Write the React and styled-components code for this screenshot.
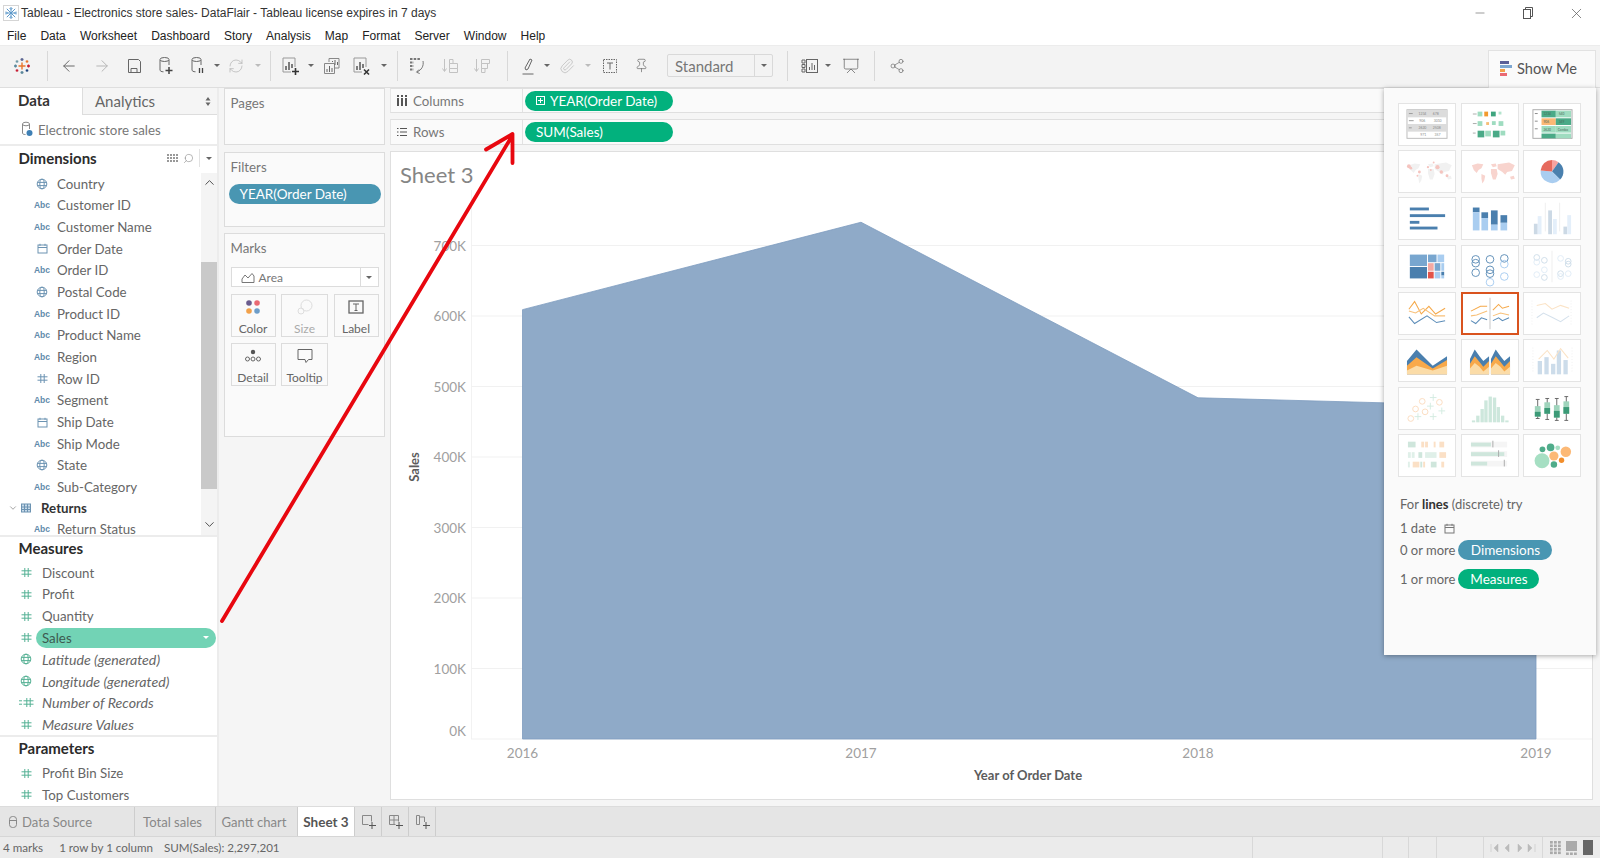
import React from "react";
import styled, { createGlobalStyle } from "styled-components";
import { ArrowLeft, ArrowRight, Minus, Paperclip, Pin, Presentation, RefreshCw, Share2, X, Search, ChevronUp, ChevronDown } from "lucide-react";

const GlobalStyle = createGlobalStyle`
  html, body { margin: 0; padding: 0; background: #fff; }
  body { font-family: "Lato", "Open Sans", sans-serif; color: #666; overflow: hidden; }
  * { box-sizing: border-box; }
`;

const Page = styled.div`
  position: relative;
  width: 1600px;
  height: 858px;
  display: flex;
  flex-direction: column;
  overflow: hidden;
`;

const TitleBar = styled.div`
  height: 26px;
  display: flex;
  align-items: center;
  padding-left: 3px;
  font: 12px "Liberation Sans", sans-serif;
  color: #333;
  background: #fff;
`;
const TitleText = styled.span`
  margin-left: 2px;
  flex: 1;
`;
const WindowBtn = styled.div`
  width: 48px;
  display: flex;
  justify-content: center;
  color: #555;
`;
const MenuBar = styled.div`
  height: 19px;
  display: flex;
  align-items: center;
  padding-left: 7px;
  gap: 14.1px;
  font: 12px "Liberation Sans", sans-serif;
  color: #222;
  background: #fff;
`;

const Toolbar = styled.div`
  height: 43px;
  display: flex;
  align-items: center;
  padding-bottom: 2px;
  background: #f3f3f3;
  border-top: 1px solid #ececec;
  border-bottom: 1px solid #dedede;
`;
const LogoSlot = styled.div`
  width: 47px;
  display: flex;
  justify-content: center;
  padding-right: 3px;
`;
const Sep = styled.div`
  width: 1px;
  height: 30px;
  background: #d8d8d8;
  margin-left: ${(p) => p.$ml || 0}px;
`;
const Tool = styled.div`
  width: 24px;
  height: 24px;
  display: flex;
  align-items: center;
  justify-content: center;
  margin-left: ${(p) => p.$ml || 0}px;
  color: ${(p) => (p.$faint ? "#b4b4b4" : "#666")};
`;
const Caret = styled.div`
  width: 8px;
  height: 8px;
  display: flex;
  align-items: center;
  justify-content: center;
  margin-left: ${(p) => p.$ml || 0}px;
  &::after {
    content: "";
    border-left: 3px solid transparent;
    border-right: 3px solid transparent;
    border-top: 3px solid ${(p) => p.$color || "#666"};
  }
`;
const StandardSelect = styled.div`
  width: 106px;
  height: 23px;
  margin-left: ${(p) => p.$ml}px;
  display: flex;
  align-items: center;
  border: 1px solid #d9d9d9;
  border-radius: 2px;
  font-size: 15px;
  color: #777;
`;
const SelectLabel = styled.span`
  flex: 1;
  padding-left: 7px;
`;
const SelectArrow = styled.div`
  width: 18px;
  height: 100%;
  display: flex;
  align-items: center;
  justify-content: center;
  border-left: 1px solid #d9d9d9;
`;
const ShowMeTab = styled.div`
  margin-left: auto;
  margin-right: 4px;
  align-self: flex-end;
  width: 108px;
  height: 38px;
  margin-bottom: -3px;
  display: flex;
  align-items: center;
  padding: 0 0 3px 11px;
  gap: 5px;
  background: #fafafa;
  border: 1px solid #e2e2e2;
  border-bottom: none;
  font-size: 14.6px;
  color: #555;
`;

const Workspace = styled.div`
  flex: 1;
  display: flex;
  min-height: 0;
  background: #f5f5f5;
`;

const Sidebar = styled.div`
  width: 219px;
  display: flex;
  flex-direction: column;
  background: #fff;
  border-right: 2px solid #ececec;
`;
const SideTabs = styled.div`
  height: 27px;
  display: flex;
`;
const DataTab = styled.div`
  width: 82px;
  padding-left: 18px;
  line-height: 25px;
  font-size: 15px;
  font-weight: 700;
  color: #333;
`;
const AnalyticsTab = styled.div`
  flex: 1;
  display: flex;
  align-items: center;
  justify-content: space-between;
  padding: 0 6px 0 12px;
  font-size: 15px;
  color: #666;
  background: #f5f5f5;
  border-left: 1px solid #ddd;
  border-bottom: 1px solid #ddd;
`;
const SourceRow = styled.div`
  height: 31px;
  display: flex;
  align-items: center;
  gap: 5px;
  padding-left: 21px;
  font-size: 13.3px;
  color: #777;
  border-bottom: 2px solid #ececec;
`;
const SectionHeader = styled.div`
  height: 27px;
  display: flex;
  align-items: center;
  padding: 0 0 ${(p) => p.$drop}px 18.5px;
  font-size: 15px;
  font-weight: 700;
  color: #2b2b2b;
  border-top: ${(p) => (p.$line ? "2px solid #ececec" : "none")};
`;
const HeaderTools = styled.div`
  margin-left: auto;
  display: flex;
  align-items: center;
  gap: 5px;
  height: 18px;
  padding-right: 4px;
  color: #888;
`;
const HeaderDivider = styled.div`
  width: 1px;
  height: 18px;
  background: #e2e2e2;
`;
const DimensionsBody = styled.div`
  height: 362px;
  display: flex;
`;
const FieldList = styled.div`
  flex: 1;
`;
const ScrollTrack = styled.div`
  position: relative;
  width: 16px;
  background: #f4f4f4;
  display: flex;
  flex-direction: column;
  justify-content: space-between;
  align-items: center;
  padding: 2px 0 3px;
  color: #444;
`;
const ScrollThumb = styled.div`
  position: absolute;
  left: 0;
  right: 0;
  top: 89px;
  height: 227px;
  background: #c9c9c9;
`;
const FieldRow = styled.div`
  height: 21.67px;
  display: flex;
  align-items: center;
  padding-left: ${(p) => p.$indent}px;
  font-size: ${(p) => (p.$italic ? 14.2 : 13.3)}px;
  font-style: ${(p) => (p.$italic ? "italic" : "normal")};
  color: #666;
`;
const IconSlot = styled.div`
  width: 16px;
  display: flex;
  justify-content: center;
  align-items: center;
  font: 700 8.5px "Liberation Sans", sans-serif;
  font-style: normal;
  color: ${(p) => p.$color};
`;
const FieldName = styled.span`
  margin-left: ${(p) => p.$gap}px;
`;
const FieldPill = styled.div`
  margin-left: 2px;
  width: 180px;
  height: 20px;
  padding: 0 6px;
  display: flex;
  align-items: center;
  justify-content: space-between;
  border-radius: 10px;
  background: #72d3b5;
  color: #3d5a50;
`;
const GroupRow = styled.div`
  height: 20.7px;
  display: flex;
  align-items: center;
  padding-left: 8px;
  font-size: 13.3px;
  font-weight: 700;
  color: #333;
`;

const CardColumn = styled.div`
  width: 171px;
  padding: 0 5.5px 0 4.5px;
  display: flex;
  flex-direction: column;
`;
const Card = styled.div`
  height: ${(p) => p.$h}px;
  margin-bottom: ${(p) => p.$mb}px;
  padding: 5.5px 6px;
  background: #fafafa;
  border: 1px solid #dcdcdc;
`;
const CardTitle = styled.div`
  font-size: 13.3px;
  line-height: 17px;
  color: #777;
`;
const FilterPill = styled.div`
  margin: 8.5px 0 0 -2px;
  width: 152px;
  height: 20px;
  padding-left: 11px;
  line-height: 20px;
  border-radius: 10px;
  background: #4996b2;
  color: #fff;
  font-size: 13.5px;
`;
const MarkSelect = styled.div`
  margin-top: 10.5px;
  height: 20px;
  width: 148px;
  display: flex;
  align-items: center;
  padding-left: 9px;
  gap: 4px;
  font-size: 12px;
  color: #777;
  background: #fff;
  border: 1px solid #dcdcdc;
`;
const MarkArrow = styled.div`
  margin-left: auto;
  width: 18px;
  height: 100%;
  display: flex;
  align-items: center;
  justify-content: center;
  border-left: 1px solid #dcdcdc;
`;
const MarkGrid = styled.div`
  margin-top: 7px;
  display: grid;
  grid-template-columns: 45px 47px 45px;
  grid-auto-rows: 43px;
  gap: 6px 5.5px;
`;
const MarkButton = styled.div`
  display: flex;
  flex-direction: column;
  align-items: center;
  justify-content: space-between;
  padding: 4px 0 0;
  background: #fafafa;
  border: 1px solid #dcdcdc;
  font-size: 12px;
  color: ${(p) => (p.$faint ? "#aaa" : "#666")};
`;

const Main = styled.div`
  flex: 1;
  min-width: 0;
  padding-right: 7px;
  display: flex;
  flex-direction: column;
`;
const Shelf = styled.div`
  height: ${(p) => p.$h}px;
  margin-bottom: 6px;
  display: flex;
  align-items: center;
  background: #fafafa;
  border: 1px solid #dfdfdf;
  border-left: 1px solid #e6e6e6;
  border-right: none;
`;
const ShelfLabel = styled.div`
  width: 132px;
  height: 100%;
  display: flex;
  align-items: center;
  gap: 6px;
  padding-left: 6px;
  font-size: 13.3px;
  color: #777;
  border-right: 1px solid #e2e2e2;
`;
const GreenPill = styled.div`
  margin-left: 2px;
  width: 148px;
  height: 20px;
  display: flex;
  align-items: center;
  gap: 5px;
  padding-left: 11px;
  border-radius: 10px;
  background: #02b17d;
  color: #fff;
  font-size: 13.5px;
`;
const ChartCard = styled.div`
  flex: 1;
  margin-bottom: 6px;
  display: flex;
  flex-direction: column;
  background: #fff;
  border: 1px solid #dfdfdf;
`;
const SheetTitle = styled.div`
  height: 38px;
  padding: 6px 0 0 9px;
  font-size: 22px;
  line-height: 34px;
  color: #858585;
`;
const ChartSvg = styled.svg`
  flex: 1;
  display: block;
  width: 100%;
  font-family: "Lato", sans-serif;
`;

const TabStrip = styled.div`
  height: 31px;
  display: flex;
  background: #e5e5e5;
  border-top: 1px solid #dcdcdc;
  border-bottom: 1px solid #d6d6d6;
`;
const SheetTab = styled.div`
  width: ${(p) => p.$w}px;
  display: flex;
  align-items: center;
  justify-content: ${(p) => (p.$left ? "flex-start" : "center")};
  gap: 4px;
  padding: 0 ${(p) => p.$pr || 0}px 0 ${(p) => (p.$left ? 8 : 0)}px;
  font-size: ${(p) => (p.$active ? 13.5 : 13.1)}px;
  font-weight: ${(p) => (p.$active ? 700 : 400)};
  color: ${(p) => (p.$active ? "#555" : "#888")};
  background: ${(p) => (p.$active ? "#fff" : "transparent")};
  border-right: 1px solid #cdcdcd;
`;
const StatusBar = styled.div`
  height: 21px;
  display: flex;
  align-items: center;
  background: #ebebeb;
  font-size: 11.6px;
  color: #666;
`;
const StatusText = styled.span`
  margin-left: ${(p) => p.$ml}px;
`;
const StatusSpacer = styled.div`
  flex: 1;
`;
const StatusCell = styled.div`
  width: ${(p) => p.$w}px;
  height: 100%;
  display: flex;
  align-items: center;
  justify-content: space-around;
  padding: 0 4px;
  border-left: 1px solid #d8d8d8;
`;

const ShowMePanel = styled.div`
  position: absolute;
  left: 1384px;
  top: 88px;
  width: 212px;
  height: 567px;
  padding: 14.5px 14px 0;
  background: #fafafa;
  box-shadow: 0 1px 5px rgba(0, 0, 0, 0.35);
  font-size: 13px;
  color: #666;
`;
const ThumbGrid = styled.div`
  display: grid;
  grid-template-columns: repeat(3, 58px);
  grid-auto-rows: 43px;
  column-gap: 4.6px;
  row-gap: 4.4px;
`;
const Thumb = styled.div`
  background: #fff;
  border: ${(p) => (p.$active ? "1px solid #d9531e" : "1px solid #e4e4e4")};
  box-shadow: ${(p) => (p.$active ? "inset 0 0 0 1px #d9531e" : "none")};
  svg { display: block; width: 100%; height: 100%; }
`;
const InfoLine = styled.div`
  display: flex;
  align-items: center;
  height: ${(p) => p.$h}px;
  gap: ${(p) => p.$gap || 0}px;
  margin: ${(p) => p.$mt || 0}px 0 0 2px;
`;
const Strong = styled.b`
  color: #333;
`;
const InfoPill = styled.span`
  width: ${(p) => p.$w}px;
  height: 20px;
  display: inline-flex;
  align-items: center;
  justify-content: center;
  border-radius: 10px;
  background: ${(p) => p.$bg};
  color: #fff;
  font-size: 13.5px;
`;

const ArrowOverlay = styled.svg`
  position: absolute;
  inset: 0;
  width: 1600px;
  height: 858px;
  pointer-events: none;
`;

const line = { fill: "none", stroke: "currentColor", strokeWidth: 1 };

const HashIcon = ({ color }) => (
  <svg width="11" height="11" viewBox="0 0 11 11" fill="none" stroke={color} strokeWidth="1">
    <path d="M3.8 1v9M7.2 1v9M.5 3.8h10M.5 7.2h10" />
  </svg>
);
const GlobeIcon = ({ color }) => (
  <svg width="12" height="12" viewBox="0 0 12 12" fill="none" stroke={color} strokeWidth="1">
    <circle cx="6" cy="6" r="4.8" />
    <ellipse cx="6" cy="6" rx="2.2" ry="4.8" />
    <path d="M1.2 4.4h9.6M1.2 7.6h9.6" />
  </svg>
);
const CalendarIcon = ({ color = "#6c93b2" }) => (
  <svg width="11" height="11" viewBox="0 0 11 11" fill="none" stroke={color} strokeWidth="1">
    <rect x="1" y="2" width="9" height="8" />
    <path d="M1 4.5h9M3 .8v2M8 .8v2" />
  </svg>
);
const CylinderIcon = ({ children, width = 16 }) => (
  <svg width={width} height="20" viewBox="0 0 16 20" style={line}>
    <path d="M2 4v10c0 1 1.4 1.8 3.5 1.8M11 4v5" />
    <ellipse cx="6.5" cy="3.5" rx="4.5" ry="2" />
    {children}
  </svg>
);
const BarSheet = ({ children }) => (
  <svg width="20" height="20" viewBox="0 0 20 20" fill="none" stroke="#999" strokeWidth="1">
    <path d="M2 2h12v9M2 2v14h8" />
    <path d="M5 14V10M8 14V6M11 12V8" strokeWidth="1.5" stroke="#555" />
    {children}
  </svg>
);
const FieldIcon = ({ type, color }) => {
  if (type === "abc") return "Abc";
  if (type === "globe") return <GlobeIcon color={color} />;
  if (type === "date") return <CalendarIcon color={color} />;
  if (type === "count")
    return (
      <svg width="15" height="11" viewBox="0 0 15 11" fill="none" stroke={color}>
        <path d="M7.8 1v9M11.2 1v9M4.5 3.8h10M4.5 7.2h10M0 3.8h3M0 7.2h3" />
      </svg>
    );
  return <HashIcon color={color} />;
};

const dimensions = [
  ["globe", "Country"],
  ["abc", "Customer ID"],
  ["abc", "Customer Name"],
  ["date", "Order Date"],
  ["abc", "Order ID"],
  ["globe", "Postal Code"],
  ["abc", "Product ID"],
  ["abc", "Product Name"],
  ["abc", "Region"],
  ["hash", "Row ID"],
  ["abc", "Segment"],
  ["date", "Ship Date"],
  ["abc", "Ship Mode"],
  ["globe", "State"],
  ["abc", "Sub-Category"],
];

const measures = [
  ["hash", "Discount"],
  ["hash", "Profit"],
  ["hash", "Quantity"],
  ["hash", "Sales", true],
  ["globe", "Latitude (generated)", false, true],
  ["globe", "Longitude (generated)", false, true],
  ["count", "Number of Records", false, true],
  ["hash", "Measure Values", false, true],
];

const menus = ["File", "Data", "Worksheet", "Dashboard", "Story", "Analysis", "Map", "Format", "Server", "Window", "Help"];

const DimRow = ({ type, name }) => (
  <FieldRow $indent={34}>
    <IconSlot $color="#5f8bab">
      <FieldIcon type={type} color="#6c93b2" />
    </IconSlot>
    <FieldName $gap={7}>{name}</FieldName>
  </FieldRow>
);

const MeasureRow = ({ type, name, pill, italic }) => (
  <FieldRow $indent={18} $italic={italic}>
    <IconSlot $color="#4eab8a">
      <FieldIcon type={type} color="#55b194" />
    </IconSlot>
    {pill ? (
      <FieldPill>
        {name}
        <Caret $color="#fff" />
      </FieldPill>
    ) : (
      <FieldName $gap={8}>{name}</FieldName>
    )}
  </FieldRow>
);

const TableauLogo = () => (
  <svg width="18" height="18" viewBox="0 0 18 18" strokeWidth="1.4" fill="none">
    <path d="M9 5.5v7M5.5 9h7" stroke="#e8762d" />
    <path d="M9 1v3M7.5 2.5h3" stroke="#5b6591" />
    <path d="M9 14v3M7.5 15.5h3" stroke="#5b879b" />
    <path d="M2.5 7.5v3M1 9h3" stroke="#59879b" />
    <path d="M15.5 7.5v3M14 9h3" stroke="#c72035" />
    <path d="M4 3.2v2.6M2.7 4.5h2.6" stroke="#7099a6" />
    <path d="M14 3.2v2.6M12.7 4.5h2.6" stroke="#e8762d" />
    <path d="M4 12.2v2.6M2.7 13.5h2.6" stroke="#c72035" />
    <path d="M14 12.2v2.6M12.7 13.5h2.6" stroke="#1f447e" />
  </svg>
);

const WindowIcon = () => (
  <svg width="16" height="16" viewBox="0 0 16 16" fill="none" stroke="#5b97c9" strokeWidth="1">
    <rect x=".5" y=".5" width="15" height="15" stroke="#d5d5d5" />
    <path d="M8 2v12M2 8h12M3.8 3.8l8.4 8.4M12.2 3.8l-8.4 8.4" />
    <path d="M6.5 3L8 4.5 9.5 3M6.5 13L8 11.5 9.5 13M3 6.5L4.5 8 3 9.5M13 6.5L11.5 8 13 9.5" />
  </svg>
);

const ThumbTable = () => (
  <svg viewBox="0 0 58 43">
    <rect x="8" y="6" width="42" height="30" fill="#fff" stroke="#bbb" />
    <rect x="8" y="6" width="42" height="8" fill="#dcdcdc" />
    <rect x="8" y="21" width="42" height="8" fill="#dcdcdc" />
    <path d="M10 10h4M10 17.5h5M10 25h3" stroke="#999" />
    <g fontSize="3.6" fill="#888" fontFamily="Lato">
      <text x="20" y="11.5">1234</text>
      <text x="35" y="11.5">678</text>
      <text x="21" y="19">906</text>
      <text x="36" y="19">3010</text>
      <text x="20" y="26.5">2620</text>
      <text x="35" y="26.5">2508</text>
      <text x="22" y="34">971</text>
      <text x="37" y="34">357</text>
    </g>
  </svg>
);

const ThumbHeat = () => {
  const cells = [
    [16, 8, 5, 5, "#9fdcc0"], [23, 8, 4, 5, "#f29a2e"], [30, 8, 5, 5, "#3fa57f"], [38, 8, 3, 3, "#b3e4cd"],
    [16, 18, 5, 5, "#9fdcc0"], [25, 19, 3, 3, "#f7bd75"], [31, 18, 4, 4, "#9fdcc0"], [38, 18, 5, 5, "#9fdcc0"],
    [16, 28, 7, 7, "#4aaa87"], [24, 28, 6, 6, "#9fdcc0"], [32, 28, 7, 7, "#4aaa87"], [40, 28, 5, 5, "#9fdcc0"],
  ];
  return (
    <svg viewBox="0 0 58 43">
      <path d="M11 10.5h4M11 20.5h4M11 30.5h3" stroke="#aaa" />
      {cells.map(([x, y, w, h, c]) => (
        <rect key={`${x}-${y}`} x={x} y={y} width={w} height={h} fill={c} />
      ))}
    </svg>
  );
};

const ThumbHighlight = () => (
  <svg viewBox="0 0 58 43">
    <rect x="9" y="6" width="41" height="30" fill="#fff" stroke="#aaa" />
    <path d="M11 10h3M11 18h3M11 26h3" stroke="#888" />
    <rect x="18" y="7" width="15" height="7" fill="#4aaa87" />
    <rect x="33" y="7" width="16" height="7" fill="#9fdcc0" />
    <rect x="18" y="15" width="15" height="7" fill="#fbb875" />
    <rect x="33" y="15" width="16" height="7" fill="#4aaa87" />
    <rect x="18" y="23" width="15" height="7" fill="#9fdcc0" />
    <rect x="33" y="23" width="16" height="7" fill="#9fdcc0" />
    <rect x="18" y="31" width="15" height="5" fill="#4aaa87" />
    <rect x="33" y="31" width="16" height="5" fill="#9fdcc0" />
    <g fontSize="3.4" fill="#4c6b5c" fontFamily="Lato">
      <text x="20" y="12">1234</text>
      <text x="36" y="12">540</text>
      <text x="20" y="20">906</text>
      <text x="36" y="20">349</text>
      <text x="20" y="28">2620</text>
      <text x="35" y="28">Combo</text>
    </g>
  </svg>
);

const worldBlobs = "M7 9l6-2 6 1-2 4-3 2-2 3-3-3zM17 18l4 2-1 5-2 3-1-5zM27 8l5-1 1 3-4 1zM27 13l6 0 1 5-2 6-3 0-2-7zM34 8l12-2 6 3-3 6-5 1-2 3-3-3-5-3zM47 21l4-1 1 3-4 1z";

const ThumbSymbolMap = () => (
  <svg viewBox="0 0 58 43">
    <g transform="translate(3 6)">
      <path d={worldBlobs} fill="#f1f1f1" />
    </g>
    {[[10, 16, 2], [12, 18, 1.5], [21, 22, 1.5], [30, 17, 1.2], [33, 20, 1], [40, 17, 2.2], [44, 22, 1.8], [50, 26, 1.5], [19, 26, 1], [36, 12, 1]].map(([x, y, r]) => (
      <circle key={`${x}-${y}`} cx={x} cy={y} r={r} fill="#f5c4bf" />
    ))}
  </svg>
);

const ThumbFilledMap = () => (
  <svg viewBox="0 0 58 43">
    <g transform="translate(3 6)">
      <path d={worldBlobs} fill="#f8d4ce" />
    </g>
  </svg>
);

const pieSlice = (a, b, color) => {
  const r = 12;
  const cx = 29;
  const cy = 21.5;
  const p = (t) => [cx + r * Math.sin((t * Math.PI) / 180), cy - r * Math.cos((t * Math.PI) / 180)];
  const [x1, y1] = p(a);
  const [x2, y2] = p(b);
  const large = b - a > 180 ? 1 : 0;
  return <path key={a} d={`M${cx} ${cy}L${x1} ${y1}A${r} ${r} 0 ${large} 1 ${x2} ${y2}Z`} fill={color} />;
};

const ThumbPie = () => (
  <svg viewBox="0 0 58 43">
    {pieSlice(0, 35, "#f7a3a0")}
    {pieSlice(35, 135, "#4a80ae")}
    {pieSlice(135, 275, "#a9cdf0")}
    {pieSlice(275, 360, "#e66a5e")}
  </svg>
);

const ThumbHBars = () => (
  <svg viewBox="0 0 58 43" fill="#4a7fae">
    <rect x="11" y="10" width="20" height="3" />
    <rect x="11" y="17" width="37" height="3" />
    <rect x="11" y="24" width="10" height="3" />
    <rect x="11" y="30" width="29" height="3" />
  </svg>
);

const ThumbStacked = () => (
  <svg viewBox="0 0 58 43">
    {[[11, 10, 15, 34], [20, 15, 21, 34], [30, 13, 28, 34], [40, 18, 26, 34]].map(([x, top, mid, bot]) => (
      <g key={x}>
        <rect x={x} y={top} width="7" height={mid - top} fill="#4a7fae" />
        <rect x={x} y={mid} width="7" height={bot - mid} fill="#a9cdf0" />
      </g>
    ))}
  </svg>
);

const ThumbSideBars = () => (
  <svg viewBox="0 0 58 43">
    <path d="M22 5v30M37 5v30" stroke="#eee" />
    {[[10, 27, "#ccd9e5"], [14, 19, "#e4effa"], [25, 13, "#ccd9e5"], [30, 22, "#e4effa"], [41, 30, "#ccd9e5"], [45, 18, "#e4effa"]].map(([x, y, c]) => (
      <rect key={x} x={x} y={y} width="4" height={38 - y} fill={c} />
    ))}
  </svg>
);

const ThumbTreemap = () => {
  const cells = [
    [11, 9, 18, 12, "#78a6cf"], [11, 22, 18, 12, "#4a7fae"], [30, 9, 9, 8, "#78a6cf"], [40, 9, 7, 8, "#a9cdf0"],
    [30, 18, 6, 8, "#f4a9a3"], [37, 18, 6, 8, "#78a6cf"], [44, 18, 3, 8, "#a9cdf0"],
    [30, 27, 6, 7, "#e2544a"], [37, 27, 6, 7, "#a9cdf0"], [44, 27, 3, 4, "#4a7fae"], [44, 31, 3, 3, "#a9cdf0"],
  ];
  return (
    <svg viewBox="0 0 58 43">
      {cells.map(([x, y, w, h, c]) => (
        <rect key={`${x}-${y}`} x={x} y={y} width={w} height={h} fill={c} />
      ))}
    </svg>
  );
};

const Rings = ({ items, color, light }) => (
  <g fill="none" strokeWidth="1">
    {items.map(([x, y, r, lt]) => (
      <circle key={`${x}-${y}`} cx={x} cy={y} r={r} stroke={lt ? light : color} />
    ))}
  </g>
);

const ThumbCircles = () => (
  <svg viewBox="0 0 58 43">
    <Rings
      color="#5f8fb8"
      light="#a9cdf0"
      items={[[14, 14, 4], [14, 18, 4], [14, 28, 4], [29, 14, 4], [29, 25, 4], [29, 29, 4], [29, 38, 4, 1], [44, 13, 4], [44, 19, 4, 1], [44, 32, 4, 1]]}
    />
  </svg>
);

const ThumbSideCircles = () => (
  <svg viewBox="0 0 58 43">
    <path d="M29 5v33" stroke="#eee" />
    <Rings
      color="#cfdde9"
      light="#e1ecf7"
      items={[[13, 12, 3], [13, 17, 3, 1], [21, 15, 3], [21, 25, 3, 1], [13, 30, 3, 1], [21, 33, 3], [38, 13, 3, 1], [46, 16, 3], [46, 19, 3], [38, 29, 3], [38, 32, 3, 1], [46, 29, 3, 1]]}
    />
  </svg>
);

const Poly = ({ points, color, width = 1.1 }) => <polyline points={points} fill="none" stroke={color} strokeWidth={width} />;

const ThumbLines = () => (
  <svg viewBox="0 0 58 43">
    <Poly points="10,17 16,9 23,22 31,14 38,22 48,16" color="#f5a94a" />
    <Poly points="10,19 17,21 25,16 37,24 48,24" color="#f8c078" />
    <Poly points="10,25 16,32 29,24 39,31 48,29" color="#5b8cb8" />
  </svg>
);

const ThumbDiscrete = () => (
  <svg viewBox="0 0 58 43">
    <path d="M29 5v33" stroke="#c4c4c4" />
    <Poly points="9,19 19,14 26,14" color="#f5a94a" />
    <Poly points="9,24 15,23 26,19" color="#f8c078" />
    <Poly points="9,29 14,32 20,26 26,28" color="#5b8cb8" />
    <Poly points="32,18 38,12 42,16 49,14" color="#f5a94a" />
    <Poly points="32,24 40,21 49,23" color="#f8c078" />
    <Poly points="32,29 38,26 42,29 49,26" color="#5b8cb8" />
  </svg>
);

const ThumbDualLines = () => (
  <svg viewBox="0 0 58 43">
    <path d="M8 8v27M49 8v27" stroke="#efefef" strokeDasharray="1 2" />
    <Poly points="13,13 22,11 29,17 38,13 47,16" color="#fbe3c6" />
    <Poly points="13,26 20,21 30,26 38,30 47,24" color="#d5e1ec" />
  </svg>
);

const ThumbArea = () => (
  <svg viewBox="0 0 58 43">
    <path d="M8 22L18 10 35 27 50 17V36H8Z" fill="#4a7fae" />
    <path d="M8 27L18 18 35 30 50 21V36H8Z" fill="#f8a94a" />
    <path d="M8 32L18 27 35 32 50 27V36H8Z" fill="#fbdca8" />
  </svg>
);

const AreaPair = ({ x }) => (
  <g transform={`translate(${x} 0)`}>
    <path d="M0 20L5 10 10 17 14 22 20 17V36H0Z" fill="#4a7fae" />
    <path d="M0 25L5 17 10 23 14 28 20 22V36H0Z" fill="#f8a94a" />
    <path d="M0 30L5 24 10 28 14 33 20 28V36H0Z" fill="#fbdca8" />
  </g>
);

const ThumbAreaPair = () => (
  <svg viewBox="0 0 58 43">
    <AreaPair x={8} />
    <AreaPair x={30} />
  </svg>
);

const ThumbCombo = () => (
  <svg viewBox="0 0 58 43">
    {[[14, 22], [21, 18], [28, 25], [34, 11], [41, 21]].map(([x, y]) => (
      <rect key={x} x={x} y={y} width="4.5" height={36 - y} fill="#ccdcea" />
    ))}
    <Poly points="15,20 24,11 31,20 38,9 46,19" color="#fbe3c6" />
    <path d="M9 8v27M50 8v27" stroke="#efefef" strokeDasharray="1 2" />
  </svg>
);

const ThumbScatter = () => (
  <svg viewBox="0 0 58 43">
    <Rings color="#fbdcc0" light="#fbdcc0" items={[[12, 32, 3], [17, 22, 3], [27, 25, 3], [24, 14, 3], [42, 15, 3]]} />
    <path d="M16 30h7M19.5 26.5v7M29 19h7M32.5 15.5v7M32 10h7M35.5 6.5v7M32 30h7M35.5 26.5v7M41 24h7M44.5 20.5v7" stroke="#d4ece2" />
  </svg>
);

const ThumbHistogram = () => (
  <svg viewBox="0 0 58 43">
    {[[10, 34], [14.5, 29], [19, 22], [23, 13], [27.5, 9], [32, 10], [36, 20], [40.5, 29], [45, 34]].map(([x, y]) => (
      <rect key={x} x={x} y={y} width="3.5" height={36 - y} fill="#cde7dc" />
    ))}
  </svg>
);

const ThumbBox = () => (
  <svg viewBox="0 0 58 43">
    {[[14, 12, 32, 19, 30], [24, 11, 33, 15, 27], [34, 11, 34, 18, 31], [44, 9, 34, 14, 27]].map(([x, a, b, t, m]) => (
      <g key={x}>
        <path d={`M${x} ${a}V${b}M${x - 2} ${a}h4M${x - 2} ${b}h4`} stroke="#666" />
        <rect x={x - 3} y={t} width="6" height={m - t} fill="#9fd4bc" />
        <rect x={x - 3} y={t + 6} width="6" height={m - t - 6} fill="#3c9a77" />
      </g>
    ))}
  </svg>
);

const ThumbGantt = () => {
  const cells = [
    [9, 7, 8, 6, "#cfe6dc"], [23, 7, 3, 6, "#fbe0c6"], [27, 7, 3, 6, "#fbe0c6"], [36, 7, 2, 6, "#fbe0c6"], [42, 7, 5, 6, "#fbe0c6"],
    [9, 18, 3, 6, "#e0f0e9"], [13, 18, 3, 6, "#e0f0e9"], [20, 18, 4, 6, "#cfe6dc"], [27, 18, 12, 6, "#e0f0e9"], [42, 18, 7, 6, "#fbe0c6"],
    [9, 28, 2, 6, "#e0f0e9"], [14, 28, 7, 6, "#fbe0c6"], [22, 28, 2, 6, "#cfe6dc"], [25, 28, 2, 6, "#fbe0c6"], [33, 28, 6, 6, "#cfe6dc"], [44, 28, 3, 6, "#fbe0c6"],
  ];
  return (
    <svg viewBox="0 0 58 43">
      {cells.map(([x, y, w, h, c]) => (
        <rect key={`${x}-${y}`} x={x} y={y} width={w} height={h} fill={c} />
      ))}
    </svg>
  );
};

const ThumbBullet = () => (
  <svg viewBox="0 0 58 43">
    {[[8, 28, 32], [18, 42, 38], [28, 24, 44]].map(([y, w, mark]) => (
      <g key={y}>
        <rect x="9" y={y - 1} width="38" height="6" fill="#f5f5f5" />
        <rect x="9" y={y} width={w - 7} height="4" fill="#cfe6dc" />
        <path d={`M${mark} ${y - 2}v7`} stroke="#aaa" />
      </g>
    ))}
  </svg>
);

const ThumbBubbles = () => (
  <svg viewBox="0 0 58 43">
    {[[19, 15, 3, "#4fac8a"], [27.5, 13, 4, "#4fac8a"], [35, 13.5, 2.5, "#a6dfc3"], [43.5, 17.5, 5.5, "#fcb976"], [31, 22, 4.8, "#fcb976"], [18.5, 27, 7.8, "#a6dfc3"], [31, 31, 3.4, "#4fac8a"], [39, 26.5, 2.8, "#f28e2b"]].map(([x, y, r, c]) => (
      <circle key={`${x}-${y}`} cx={x} cy={y} r={r} fill={c} />
    ))}
  </svg>
);

const thumbs = [
  ThumbTable, ThumbHeat, ThumbHighlight,
  ThumbSymbolMap, ThumbFilledMap, ThumbPie,
  ThumbHBars, ThumbStacked, ThumbSideBars,
  ThumbTreemap, ThumbCircles, ThumbSideCircles,
  ThumbLines, ThumbDiscrete, ThumbDualLines,
  ThumbArea, ThumbAreaPair, ThumbCombo,
  ThumbScatter, ThumbHistogram, ThumbBox,
  ThumbGantt, ThumbBullet, ThumbBubbles,
];

// chart pixels are measured from the top left of the svg (card inner area)
const plotX = (x) => x - 391;
const plotY = (k) => 549 - k * 0.705;
const sales = [
  [522.5, 609],
  [861, 733],
  [1198, 484],
  [1536, 471],
];
const ticks = [0, 100, 200, 300, 400, 500, 600, 700];

const Chart = () => {
  const top = sales.map(([x, k]) => `${plotX(x)},${plotY(k)}`).join(" ");
  const area = `${plotX(522.5)},${plotY(0)} ${top} ${plotX(1536)},${plotY(0)}`;
  return (
    <ChartSvg viewBox="0 0 1201 609" preserveAspectRatio="none">
      <path d="M80.5 0V549" stroke="#f2f2f2" />
      {ticks.map((k) => (
        <g key={k}>
          <line x1="80" x2="1201" y1={plotY(k)} y2={plotY(k)} stroke="#f1f1f1" />
          <text x="75" y={k === 0 ? 546 : plotY(k) + 5} textAnchor="end" fontSize="13.5" fill="#a0a0a0">
            {k}K
          </text>
        </g>
      ))}
      <polygon points={area} fill="#8faac8" stroke="#7e9cbf" strokeWidth="0.8" />
      {["2016", "2017", "2018", "2019"].map((y, i) => (
        <text key={y} x={plotX(sales[i][0])} y="568" textAnchor="middle" fontSize="13.5" fill="#a0a0a0">
          {y}
        </text>
      ))}
      <text x="637" y="590" textAnchor="middle" fontSize="13" fontWeight="700" fill="#5c5c5c">
        Year of Order Date
      </text>
      <text transform="translate(28 277) rotate(-90)" textAnchor="middle" fontSize="13" fontWeight="700" fill="#5c5c5c">
        Sales
      </text>
    </ChartSvg>
  );
};

const App = () => (
  <Page>
    <GlobalStyle />
    <TitleBar>
      <WindowIcon />
      <TitleText>Tableau - Electronics store sales- DataFlair - Tableau license expires in 7 days</TitleText>
      <WindowBtn>
        <Minus size={14} strokeWidth={1} />
      </WindowBtn>
      <WindowBtn>
        <svg width="12" height="14" viewBox="0 0 12 14" style={line}>
          <rect x="1.5" y="3.5" width="7" height="9" />
          <path d="M3.5 3.5V1.5H10.5V10.5H8.5" />
        </svg>
      </WindowBtn>
      <WindowBtn>
        <X size={17} strokeWidth={1} />
      </WindowBtn>
    </TitleBar>
    <MenuBar>
      {menus.map((m) => (
        <span key={m}>{m}</span>
      ))}
    </MenuBar>
    <Toolbar>
      <LogoSlot>
        <TableauLogo />
      </LogoSlot>
      <Sep />
      <Tool $ml={9}>
        <ArrowLeft size={18} strokeWidth={1.3} />
      </Tool>
      <Tool $ml={9} $faint>
        <ArrowRight size={18} strokeWidth={1.3} />
      </Tool>
      <Tool $ml={8}>
        <svg width="15" height="16" viewBox="0 0 15 16" style={line}>
          <path d="M1.5 1.5h10l2 2v11h-12z" />
          <path d="M4 14.5v-4h6v4" />
        </svg>
      </Tool>
      <Tool $ml={8}>
        <CylinderIcon>
          <path d="M11 11v7M7.5 14.5h7" strokeWidth="1.5" stroke="#444" />
        </CylinderIcon>
      </Tool>
      <Tool $ml={8}>
        <CylinderIcon>
          <path d="M9.5 12v5M12.5 12v5" strokeWidth="1.3" stroke="#444" />
        </CylinderIcon>
      </Tool>
      <Caret $ml={3} />
      <Tool $ml={3} $faint>
        <RefreshCw size={16} strokeWidth={1.1} />
      </Tool>
      <Caret $ml={6} $color="#bbb" />
      <Sep $ml={8} />
      <Tool $ml={8}>
        <BarSheet>
          <path d="M14.5 12v7M11 15.5h7" strokeWidth="1.6" stroke="#333" />
        </BarSheet>
      </Tool>
      <Caret $ml={4} />
      <Tool $ml={5}>
        <svg width="18" height="18" viewBox="0 0 18 18" fill="none" stroke="#888">
          <path d="M6 5V1.5h10V11h-4M1.5 6.5h10v10h-10z" />
          <path d="M4 15v-3M6.5 15V9M9 15v-4M9.5 5V4M12 8V3M14.5 8V5" stroke="#666" />
        </svg>
      </Tool>
      <Tool $ml={6}>
        <BarSheet>
          <path d="M12 13.5l5 5M17 13.5l-5 5" strokeWidth="1.6" stroke="#333" />
        </BarSheet>
      </Tool>
      <Caret $ml={6} />
      <Sep $ml={9} />
      <Tool $ml={7}>
        <svg width="18" height="20" viewBox="0 0 18 20" fill="none" stroke="#777">
          <path d="M2 3h10M2 6.5h4M2 10h4M2 13.5h4" strokeDasharray="2.5 1.2" strokeWidth="2" />
          <path d="M15 5c1 5-1.5 9-6 11" />
          <path d="M11 13.5l-2.5 2.7 3.2 1.3" />
        </svg>
      </Tool>
      <Tool $ml={9}>
        <svg width="18" height="18" viewBox="0 0 18 18" fill="none" stroke="#c2c2c2">
          <path d="M3.5 2v12M1.5 11.5L3.5 14.5l2-3" />
          <path d="M8.5 2.5h3.5v4H8.5zM8.5 6.5h8v5h-8zM8.5 11.5h8v4h-8z" />
        </svg>
      </Tool>
      <Tool $ml={8}>
        <svg width="18" height="18" viewBox="0 0 18 18" fill="none" stroke="#c2c2c2">
          <path d="M3.5 2v12M1.5 11.5L3.5 14.5l2-3" />
          <path d="M8.5 2.5h8v4h-8zM8.5 6.5h6v5h-6zM8.5 11.5h3.5v4H8.5z" />
        </svg>
      </Tool>
      <Sep $ml={13} />
      <Tool $ml={9}>
        <svg width="16" height="20" viewBox="0 0 16 20" style={line}>
          <path d="M5 14l-1-2 5-9 2 1-4 9zM1.5 18h11" />
        </svg>
      </Tool>
      <Caret $ml={2} />
      <Tool $ml={4} $faint>
        <Paperclip size={16} strokeWidth={1} />
      </Tool>
      <Caret $ml={5} $color="#bbb" />
      <Tool $ml={6}>
        <svg width="16" height="16" viewBox="0 0 16 16" fill="none" stroke="currentColor" strokeDasharray="1.5 1">
          <rect x="1.5" y="1.5" width="13" height="13" />
          <path d="M5 5h6M8 5v6.5" strokeDasharray="none" />
        </svg>
      </Tool>
      <Tool $ml={7}>
        <Pin size={15} strokeWidth={1.1} />
      </Tool>
      <StandardSelect $ml={14}>
        <SelectLabel>Standard</SelectLabel>
        <SelectArrow>
          <Caret />
        </SelectArrow>
      </StandardSelect>
      <Sep $ml={14} />
      <Tool $ml={10}>
        <svg width="18" height="16" viewBox="0 0 18 16" style={line}>
          <rect x="5.5" y="1.5" width="11" height="13" />
          <path d="M8.5 12V9M11 12V5M13.5 12V7" />
          <path d="M1 2h3v3H1zM1 6.5h3v3H1zM1 11h3v3H1z" />
        </svg>
      </Tool>
      <Caret $ml={2} />
      <Tool $ml={7}>
        <Presentation size={18} strokeWidth={1} />
      </Tool>
      <Sep $ml={11} />
      <Tool $ml={10}>
        <Share2 size={16} strokeWidth={1} />
      </Tool>
      <ShowMeTab>
        <svg width="12" height="16" viewBox="0 0 12 16">
          <rect y="1" width="9" height="3" fill="#5b5f97" />
          <rect y="5" width="12" height="3" fill="#7ea6d0" />
          <rect y="9" width="5" height="3" fill="#f2a14a" />
          <rect y="13" width="7" height="3" fill="#ea6a73" />
        </svg>
        Show Me
      </ShowMeTab>
    </Toolbar>
    <Workspace>
      <Sidebar>
        <SideTabs>
          <DataTab>Data</DataTab>
          <AnalyticsTab>
            Analytics
            <svg width="6" height="9" viewBox="0 0 6 9" fill="#666">
              <path d="M3 0l2.5 3.5h-5zM3 9l2.5-3.5h-5z" />
            </svg>
          </AnalyticsTab>
        </SideTabs>
        <SourceRow>
          <svg width="12" height="17" viewBox="0 0 12 17" fill="none" stroke="#888">
            <path d="M1.5 3v9c0 1 1 1.5 3 1.5M8.5 3v5" />
            <ellipse cx="5" cy="3" rx="3.5" ry="1.8" />
            <circle cx="8.5" cy="12" r="3" fill="#3f80b5" stroke="none" />
          </svg>
          Electronic store sales
        </SourceRow>
        <SectionHeader $drop={3}>
          Dimensions
          <HeaderTools>
            <svg width="11" height="9" viewBox="0 0 11 9" fill="#999">
              {[0, 3, 6].map((y) =>
                [0, 3, 6, 9].map((x) => <rect key={`${x}${y}`} x={x} y={y} width="2" height="2" />)
              )}
            </svg>
            <Search size={11} strokeWidth={1.3} style={{ transform: "scaleX(-1)" }} />
            <HeaderDivider />
            <Caret />
          </HeaderTools>
        </SectionHeader>
        <DimensionsBody>
          <FieldList>
            {dimensions.map(([type, name]) => (
              <DimRow key={name} type={type} name={name} />
            ))}
            <GroupRow>
              <ChevronDown size={10} strokeWidth={1.6} color="#777" />
              <IconSlot $color="#6c93b2">
                <svg width="11" height="10" viewBox="0 0 11 10" fill="none" stroke="#6c93b2">
                  <rect x=".5" y="1" width="9" height="8" fill="#c9dbe9" />
                  <path d="M.5 4h9M.5 6.5h9M3.5 1v8M6.5 1v8" />
                </svg>
              </IconSlot>
              <FieldName $gap={7}>Returns</FieldName>
            </GroupRow>
            <DimRow type="abc" name="Return Status" />
          </FieldList>
          <ScrollTrack>
            <ScrollThumb />
            <ChevronUp size={15} strokeWidth={1.5} />
            <ChevronDown size={15} strokeWidth={1.5} />
          </ScrollTrack>
        </DimensionsBody>
        <SectionHeader $drop={4} $line>
          Measures
        </SectionHeader>
        {measures.map(([type, name, pill, italic]) => (
          <MeasureRow key={name} type={type} name={name} pill={pill} italic={italic} />
        ))}
        <SectionHeader $drop={3} $line>
          Parameters
        </SectionHeader>
        <MeasureRow type="hash" name="Profit Bin Size" />
        <MeasureRow type="hash" name="Top Customers" />
      </Sidebar>
      <CardColumn>
        <Card $h={57} $mb={7}>
          <CardTitle>Pages</CardTitle>
        </Card>
        <Card $h={75} $mb={6}>
          <CardTitle>Filters</CardTitle>
          <FilterPill>YEAR(Order Date)</FilterPill>
        </Card>
        <Card $h={204} $mb={0}>
          <CardTitle>Marks</CardTitle>
          <MarkSelect>
            <svg width="14" height="11" viewBox="0 0 14 11" fill="none" stroke="#777">
              <path d="M1 10.5V7l3-4 3 3 4-4.5 2 2.5v6.500z" />
            </svg>
            Area
            <MarkArrow>
              <Caret />
            </MarkArrow>
          </MarkSelect>
          <MarkGrid>
            <MarkButton>
              <svg width="16" height="16" viewBox="0 0 16 16">
                <circle cx="4" cy="4" r="2.8" fill="#6a5c8e" />
                <circle cx="12" cy="4" r="2.8" fill="#ea6a73" />
                <circle cx="4" cy="12" r="2.8" fill="#f2a14a" />
                <circle cx="12" cy="12" r="2.8" fill="#6d9dc8" />
              </svg>
              Color
            </MarkButton>
            <MarkButton $faint>
              <svg width="16" height="16" viewBox="0 0 16 16" fill="none" stroke="#ddd">
                <circle cx="9.5" cy="6.5" r="5.5" />
                <circle cx="4" cy="12" r="3" />
              </svg>
              Size
            </MarkButton>
            <MarkButton>
              <svg width="16" height="16" viewBox="0 0 16 16" fill="none" stroke="#666">
                <rect x="1" y="2" width="14" height="12" strokeWidth="1.3" />
                <path d="M5 5h6M8 5v6.5M6.5 11.5h3" />
              </svg>
              Label
            </MarkButton>
            <MarkButton>
              <svg width="18" height="16" viewBox="0 0 18 16" fill="none" stroke="#666">
                <circle cx="9" cy="4" r="2.2" fill="#555" stroke="none" />
                <circle cx="3.5" cy="11" r="2" />
                <circle cx="9" cy="11" r="2" />
                <circle cx="14.5" cy="11" r="2" />
              </svg>
              Detail
            </MarkButton>
            <MarkButton>
              <svg width="16" height="16" viewBox="0 0 16 16" fill="none" stroke="#666">
                <path d="M1 1.5h14v10h-3.5L9 14.5 8 11.5H1z" />
              </svg>
              Tooltip
            </MarkButton>
          </MarkGrid>
        </Card>
      </CardColumn>
      <Main>
        <Shelf $h={25}>
          <ShelfLabel>
            <svg width="10" height="11" viewBox="0 0 10 11" fill="#555">
              <rect x="0" y="3" width="2" height="8" />
              <rect x="4" y="3" width="2" height="8" />
              <rect x="8" y="3" width="2" height="8" />
              <rect x="0" y="0" width="2" height="2" />
              <rect x="4" y="0" width="2" height="2" />
              <rect x="8" y="0" width="2" height="2" />
            </svg>
            Columns
          </ShelfLabel>
          <GreenPill>
            <svg width="9" height="9" viewBox="0 0 9 9" fill="none" stroke="#fff">
              <rect x=".5" y=".5" width="8" height="8" />
              <path d="M4.5 2v5M2 4.5h5" />
            </svg>
            YEAR(Order Date)
          </GreenPill>
        </Shelf>
        <Shelf $h={26}>
          <ShelfLabel>
            <svg width="10" height="10" viewBox="0 0 10 10" stroke="#555">
              <path d="M3 1.5h7M3 5h7M3 8.5h7" />
              <path d="M0 1.5h1.5M0 5h1.5M0 8.5h1.5" />
            </svg>
            Rows
          </ShelfLabel>
          <GreenPill>SUM(Sales)</GreenPill>
        </Shelf>
        <ChartCard>
          <SheetTitle>Sheet 3</SheetTitle>
          <Chart />
        </ChartCard>
      </Main>
    </Workspace>
    <TabStrip>
      <SheetTab $w={135} $left>
        <svg width="10" height="14" viewBox="0 0 10 14" fill="none" stroke="#888">
          <rect x="1.5" y="1.5" width="7" height="11" rx="3" />
          <path d="M1.5 5.5h7" />
        </svg>
        Data Source
      </SheetTab>
      <SheetTab $w={81} $pr={5}>
        Total sales
      </SheetTab>
      <SheetTab $w={82} $pr={5}>
        Gantt chart
      </SheetTab>
      <SheetTab $w={57} $active>
        Sheet 3
      </SheetTab>
      <SheetTab $w={27}>
        <svg width="15" height="15" viewBox="0 0 15 15" fill="none" stroke="#888">
          <path d="M1.5 1.5h9v6M1.5 1.5v9h6" />
          <path d="M11 8v7M8 11.5h7" stroke="#555" />
        </svg>
      </SheetTab>
      <SheetTab $w={27}>
        <svg width="15" height="15" viewBox="0 0 15 15" fill="none" stroke="#888">
          <path d="M1.5 1.5h9v6M1.5 1.5v9h6M1.5 6h9M6 1.5v9" />
          <path d="M11 8v7M8 11.5h7" stroke="#555" />
        </svg>
      </SheetTab>
      <SheetTab $w={27}>
        <svg width="15" height="15" viewBox="0 0 15 15" fill="none" stroke="#888">
          <path d="M1.5 1.5h3v9h-3zM4.5 3h5v5" />
          <path d="M11 8v7M8 11.5h7" stroke="#555" />
        </svg>
      </SheetTab>
    </TabStrip>
    <StatusBar>
      <StatusText $ml={3}>4 marks</StatusText>
      <StatusText $ml={16}>1 row by 1 column</StatusText>
      <StatusText $ml={11}>SUM(Sales): 2,297,201</StatusText>
      <StatusSpacer />
      <StatusCell $w={130.5} />
      <StatusCell $w={26} />
      <StatusCell $w={28} />
      <StatusCell $w={47} />
      <StatusCell $w={59}>
        {["M1 1v8M8 1L4 5l4 4z", "M7 1L3 5l4 4z", "M3 1l4 4-4 4z", "M8 1v8M1 1l4 4-4 4z"].map((d) => (
          <svg key={d} width="9" height="10" viewBox="0 0 9 10" fill="#bbb" stroke="#bbb" strokeWidth=".5">
            <path d={d} />
          </svg>
        ))}
      </StatusCell>
      <StatusCell $w={58}>
        <svg width="11" height="14" viewBox="0 0 11 14" fill="#aaa">
          {[0, 3.5, 7, 10.5].map((y) =>
            [0, 4, 8].map((x) => <rect key={`${x}${y}`} x={x} y={y} width="2.8" height="2.6" />)
          )}
        </svg>
        <svg width="11" height="14" viewBox="0 0 11 14" fill="#aaa">
          <rect x="0" y="0" width="11" height="10" />
          <rect x="0" y="11.5" width="2.8" height="2.5" />
          <rect x="4" y="11.5" width="2.8" height="2.5" />
          <rect x="8" y="11.5" width="2.8" height="2.5" />
        </svg>
        <svg width="10" height="15" viewBox="0 0 10 15">
          <rect width="10" height="15" fill="#666" />
        </svg>
      </StatusCell>
    </StatusBar>
    <ShowMePanel>
      <ThumbGrid>
        {thumbs.map((Drawing, i) => (
          <Thumb key={i} $active={i === 13}>
            <Drawing />
          </Thumb>
        ))}
      </ThumbGrid>
      <InfoLine $h={18} $mt={18} $gap={4}>
        <span>
          For <Strong>lines</Strong> (discrete) try
        </span>
      </InfoLine>
      <InfoLine $h={18} $mt={6} $gap={8}>
        1 date
        <CalendarIcon color="#777" />
      </InfoLine>
      <InfoLine $h={20} $mt={3} $gap={3}>
        0 or more
        <InfoPill $w={94} $bg="#4996b2">
          Dimensions
        </InfoPill>
      </InfoLine>
      <InfoLine $h={20} $mt={9} $gap={3}>
        1 or more
        <InfoPill $w={81} $bg="#02b17d">
          Measures
        </InfoPill>
      </InfoLine>
    </ShowMePanel>
    <ArrowOverlay viewBox="0 0 1600 858">
      <path d="M222 621L512 136M486 149.5L512.5 134V163" fill="none" stroke="#e8070f" strokeWidth="3.8" strokeLinecap="round" strokeLinejoin="round" />
    </ArrowOverlay>
  </Page>
);

export default App;
